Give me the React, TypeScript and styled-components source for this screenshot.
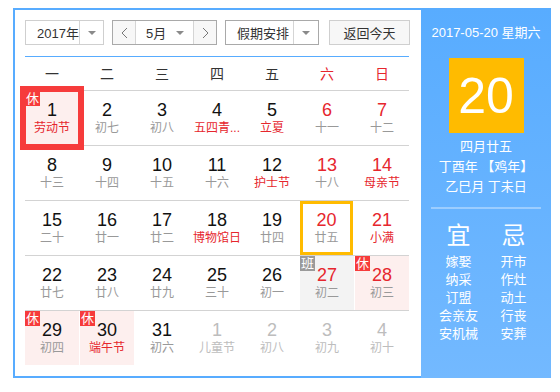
import React from 'react';
import styled, { createGlobalStyle, css } from 'styled-components';

const GlobalStyle = createGlobalStyle`
    body {
        margin: 0;
        background: #fff;
        font-family: "Liberation Sans", "Noto Sans CJK SC", sans-serif;
    }
`

const Wrap = styled.div`
    display: flex;
    width: 538px;
    height: 370px;
    margin: 8px 0 0 13px;
`
const Main = styled.div`
    width: 408px;
    box-sizing: border-box;
    border: 2px solid #58acff;
    border-right: none;
    padding: 10px 11px 0 10px;
`
const Toolbar = styled.div`
    display: flex;
    gap: 8px;
    height: 25px;
    font-size: 13px;
    color: #333;
`
const Select = styled.div<{ $w: number; $dark?: boolean }>`
    display: flex;
    width: ${p => p.$w}px;
    box-sizing: border-box;
    border: 1px solid ${p => (p.$dark ? '#a9a9a9' : '#cfcfcf')};
    background: #fff;
`
const SelectText = styled.div`
    flex: 1;
    display: flex;
    align-items: center;
    padding-left: 11px;
`
const ArrowBox = styled.div<{ $w: number; $line?: boolean }>`
    width: ${p => p.$w}px;
    display: flex;
    align-items: center;
    justify-content: center;
    ${p => p.$line && css`border-left: 1px solid #d5d5d5;`}
`
const Caret = styled.span`
    width: 0;
    height: 0;
    border-left: 4px solid transparent;
    border-right: 4px solid transparent;
    border-top: 4px solid #8a8a8a;
`
const StepBtn = styled.div<{ $side: 'l' | 'r' }>`
    width: 22px;
    display: flex;
    align-items: center;
    justify-content: center;
    background: #f7f7f7;
    ${p => (p.$side === 'l' ? 'border-right' : 'border-left')}: 1px solid #d5d5d5;
`
const MonthMid = styled.div`
    flex: 1;
    display: flex;
    align-items: center;
    justify-content: space-between;
    padding: 0 9px 0 10px;
`
const TodayBtn = styled.div`
    margin-left: auto;
    width: 81px;
    box-sizing: border-box;
    border: 1px solid #cfcfcf;
    background: #f7f7f7;
    display: flex;
    align-items: center;
    justify-content: center;
`
const BlueLine = styled.div`
    height: 1px;
    margin-top: 11px;
    width: 384px;
    background: #58acff;
`
const WeekHead = styled.div`
    display: grid;
    grid-template-columns: repeat(7, 54px);
    column-gap: 1px;
    height: 33px;
    align-items: center;
    font-size: 14px;
`
const HeadCell = styled.div<{ $red?: boolean }>`
    text-align: center;
    padding-bottom: 2px;
    color: ${p => (p.$red ? '#e6262d' : '#333')};
`
const WeekRow = styled.div`
    display: grid;
    grid-template-columns: repeat(7, 54px);
    column-gap: 1px;
    width: 384px;
    border-top: 1px solid #d3d3d3;
`
type Kind = 'normal' | 'rest' | 'work' | 'other';

const Cell = styled.div<{ $kind: Kind; $sel?: boolean; $today?: boolean }>`
    position: relative;
    height: 54px;
    box-sizing: border-box;
    display: flex;
    flex-direction: column;
    align-items: center;
    justify-content: center;
    background: ${p => (p.$kind === 'rest' ? '#fdefee' : p.$kind === 'work' ? '#f3f3f3' : '#fff')};
    ${p => p.$sel && css`
        z-index: 1;
        outline: 6px solid #f63b3b;
        outline-offset: -1px;
    `}
    ${p => p.$today && css`
        border: 3px solid #ffbb00;
        width: 53px;
    `}
`
const Num = styled.div<{ $tone: 'dark' | 'red' | 'faint' }>`
    font-size: 18px;
    line-height: 20px;
    color: ${p => (p.$tone === 'red' ? '#e6262d' : p.$tone === 'faint' ? '#bdbdbd' : '#111')};
`
const Lunar = styled.div<{ $tone: 'gray' | 'red' | 'faint' }>`
    font-size: 12px;
    line-height: 16px;
    white-space: nowrap;
    color: ${p => (p.$tone === 'red' ? '#e6262d' : p.$tone === 'faint' ? '#bdbdbd' : '#999')};
`
const Badge = styled.span<{ $work?: boolean }>`
    position: absolute;
    top: 0;
    left: 0;
    width: 15px;
    height: 15px;
    line-height: 15px;
    text-align: center;
    font-size: 13px;
    color: #fff;
    background: ${p => (p.$work ? '#9a9a9a' : '#f63b3b')};
`

const Side = styled.div`
    width: 130px;
    background: linear-gradient(#58acff, #73b9ff);
    color: #fff;
    display: flex;
    flex-direction: column;
    align-items: center;
    padding-top: 16px;
    box-sizing: border-box;
`
const SideDate = styled.div`
    font-size: 13px;
    line-height: 18px;
`
const BigDay = styled.div`
    margin-top: 16px;
    width: 75px;
    height: 75px;
    background: #ffbb00;
    font-size: 50px;
    line-height: 76px;
    text-align: center;
`
const LunarInfo = styled.div`
    margin-top: 4px;
    display: flex;
    flex-direction: column;
    align-items: center;
`
const SideLine = styled.div`
    font-size: 13px;
    line-height: 20px;
`
const Divider = styled.div`
    margin-top: 10px;
    width: 110px;
    height: 2px;
    background: rgba(255, 255, 255, 0.35);
`
const Advice = styled.div`
    margin-top: 13px;
    display: grid;
    grid-template-columns: 55px 55px;
    text-align: center;
`
const AdviceHead = styled.div`
    font-size: 24px;
    line-height: 28px;
    margin-bottom: 3px;
`
const AdviceItem = styled.div`
    font-size: 13px;
    line-height: 18px;
`

type Day = {
    n: number;
    l: string;
    red?: boolean;
    lred?: boolean;
    kind?: Kind;
    sel?: boolean;
    today?: boolean;
};

const weeks: Day[][] = [
    [
        { n: 1, l: '劳动节', lred: true, kind: 'rest', sel: true },
        { n: 2, l: '初七' },
        { n: 3, l: '初八' },
        { n: 4, l: '五四青...', lred: true },
        { n: 5, l: '立夏', lred: true },
        { n: 6, l: '十一', red: true },
        { n: 7, l: '十二', red: true },
    ],
    [
        { n: 8, l: '十三' },
        { n: 9, l: '十四' },
        { n: 10, l: '十五' },
        { n: 11, l: '十六' },
        { n: 12, l: '护士节', lred: true },
        { n: 13, l: '十八', red: true },
        { n: 14, l: '母亲节', red: true, lred: true },
    ],
    [
        { n: 15, l: '二十' },
        { n: 16, l: '廿一' },
        { n: 17, l: '廿二' },
        { n: 18, l: '博物馆日', lred: true },
        { n: 19, l: '廿四' },
        { n: 20, l: '廿五', red: true, today: true },
        { n: 21, l: '小满', red: true, lred: true },
    ],
    [
        { n: 22, l: '廿七' },
        { n: 23, l: '廿八' },
        { n: 24, l: '廿九' },
        { n: 25, l: '三十' },
        { n: 26, l: '初一' },
        { n: 27, l: '初二', red: true, kind: 'work' },
        { n: 28, l: '初三', red: true, kind: 'rest' },
    ],
    [
        { n: 29, l: '初四', kind: 'rest' },
        { n: 30, l: '端午节', lred: true, kind: 'rest' },
        { n: 31, l: '初六' },
        { n: 1, l: '儿童节', kind: 'other' },
        { n: 2, l: '初八', kind: 'other' },
        { n: 3, l: '初九', kind: 'other' },
        { n: 4, l: '初十', kind: 'other' },
    ],
];

const heads = ['一', '二', '三', '四', '五', '六', '日'];
const good = ['嫁娶', '纳采', '订盟', '会亲友', '安机械'];
const bad = ['开市', '作灶', '动土', '行丧', '安葬'];

const Chevron = ({ dir }: { dir: 'l' | 'r' }) => (
    <svg width="7" height="12" viewBox="0 0 7 12">
        <polyline
            points={dir === 'l' ? '6,1 1,6 6,11' : '1,1 6,6 1,11'}
            fill="none"
            stroke="#777"
            strokeWidth="1"
        />
    </svg>
);

const App = () => {
    return (
        <>
            <GlobalStyle />
            <Wrap>
                <Main>
                    <Toolbar>
                        <Select $w={79}>
                            <SelectText>2017年</SelectText>
                            <ArrowBox $w={23} $line><Caret /></ArrowBox>
                        </Select>
                        <Select $w={105} $dark>
                            <StepBtn $side="l"><Chevron dir="l" /></StepBtn>
                            <MonthMid>5月<Caret /></MonthMid>
                            <StepBtn $side="r"><Chevron dir="r" /></StepBtn>
                        </Select>
                        <Select $w={94} $dark>
                            <SelectText>假期安排</SelectText>
                            <ArrowBox $w={24} $line><Caret /></ArrowBox>
                        </Select>
                        <TodayBtn>返回今天</TodayBtn>
                    </Toolbar>
                    <BlueLine />
                    <WeekHead>
                        {heads.map((h, i) => (
                            <HeadCell key={h} $red={i > 4}>{h}</HeadCell>
                        ))}
                    </WeekHead>
                    {weeks.map((w, wi) => (
                        <WeekRow key={wi}>
                            {w.map((d, di) => {
                                const kind = d.kind || 'normal';
                                const other = kind === 'other';
                                return (
                                    <Cell key={di} $kind={kind} $sel={d.sel} $today={d.today}>
                                        {kind === 'rest' && <Badge>休</Badge>}
                                        {kind === 'work' && <Badge $work>班</Badge>}
                                        <Num $tone={other ? 'faint' : d.red ? 'red' : 'dark'}>{d.n}</Num>
                                        <Lunar $tone={other ? 'faint' : d.lred ? 'red' : 'gray'}>{d.l}</Lunar>
                                    </Cell>
                                );
                            })}
                        </WeekRow>
                    ))}
                </Main>
                <Side>
                    <SideDate>2017-05-20 星期六</SideDate>
                    <BigDay>20</BigDay>
                    <LunarInfo>
                        <SideLine>四月廿五</SideLine>
                        <SideLine>丁酉年 【鸡年】</SideLine>
                        <SideLine>乙巳月 丁未日</SideLine>
                    </LunarInfo>
                    <Divider />
                    <Advice>
                        <AdviceHead>宜</AdviceHead>
                        <AdviceHead>忌</AdviceHead>
                        {good.map((g, i) => (
                            <React.Fragment key={g}>
                                <AdviceItem>{g}</AdviceItem>
                                <AdviceItem>{bad[i]}</AdviceItem>
                            </React.Fragment>
                        ))}
                    </Advice>
                </Side>
            </Wrap>
        </>
    );
};

export default App;
